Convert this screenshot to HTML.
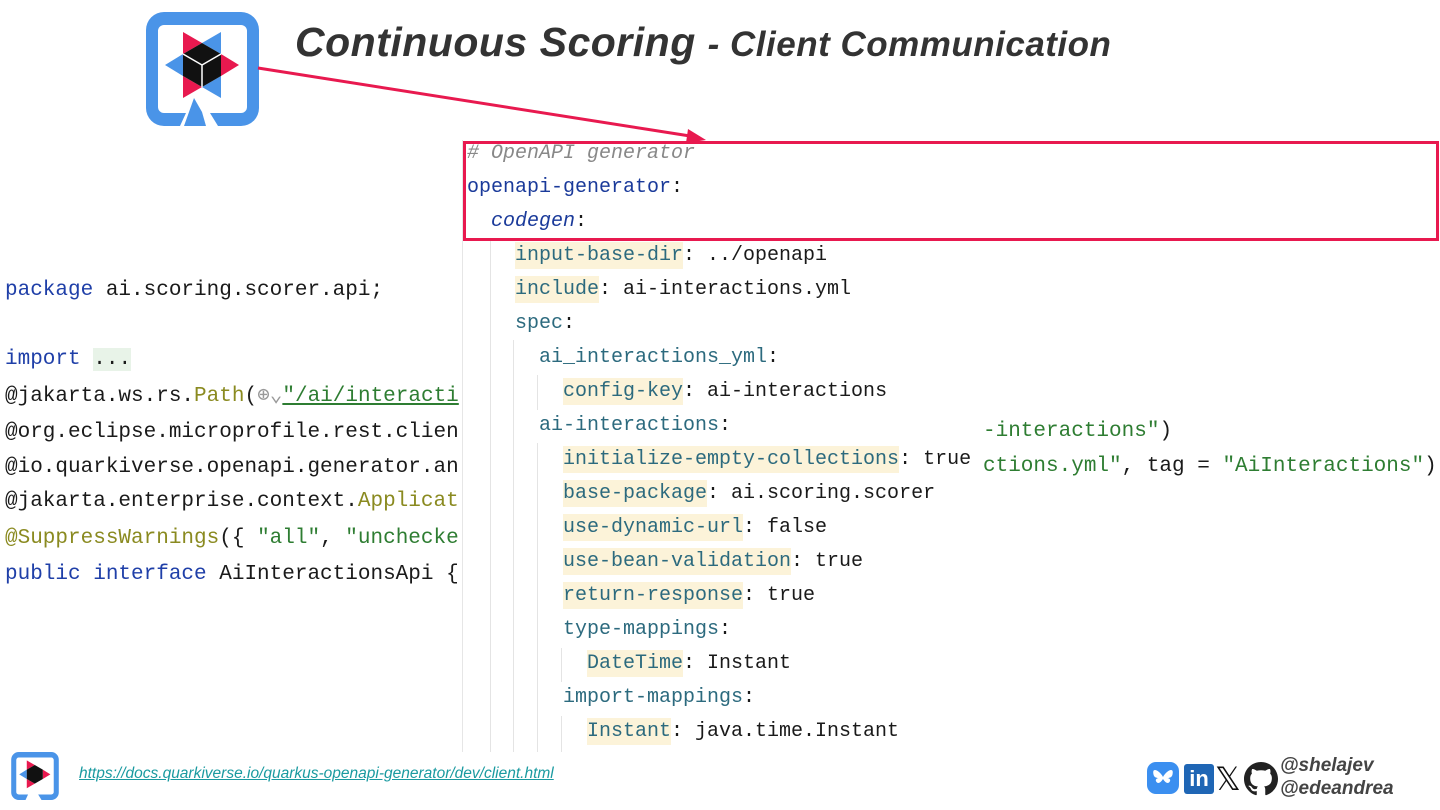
<!DOCTYPE html>
<html><head><meta charset="utf-8"><style>
*{margin:0;padding:0;box-sizing:border-box}
body{width:1440px;height:810px;background:#fff;position:relative;overflow:hidden;font-family:"Liberation Mono",monospace}
.t{position:absolute;white-space:pre}
.L{position:absolute;left:5px;font-size:21px;line-height:36px;color:#1a1a1a;white-space:pre}
.kw{color:#1f3fa8}
.an{color:#8a8a20}
.st{color:#2e7d32}
#panel{position:absolute;left:462px;top:140px;width:514px;height:612px;background:#fff;border-left:1px solid #e6e6e6}
.Y{position:absolute;font-size:20px;line-height:34px;height:34px;color:#1a1a1a;white-space:pre}
.k{color:#2c6a7e;background:#fcf3d9;padding:2px 0}
.kb{color:#1a3a9a}
.g{position:absolute;width:1px;background:#e4e4e4}
</style></head><body>

<!-- logo -->
<svg style="position:absolute;left:146px;top:12px" width="113" height="114" viewBox="0 0 113 114">
<path d="M18 0H95A18 18 0 0 1 113 18V96A18 18 0 0 1 95 114H72L64 101H95A6 6 0 0 0 101 95V19A6 6 0 0 0 95 13H18A6 6 0 0 0 12 19V95A6 6 0 0 0 18 101H40L34 114H18A18 18 0 0 1 0 96V18A18 18 0 0 1 18 0Z" fill="#4a94e8"/>
<path d="M48 86L56 100L60 114H38Z" fill="#4a94e8"/>
<polygon points="37,20 56,31 37,42" fill="#e8194f"/>
<polygon points="75,20 75,42 56,31" fill="#4a94e8"/>
<polygon points="19,53 37,42 37,64" fill="#4a94e8"/>
<polygon points="93,53 75,42 75,64" fill="#e8194f"/>
<polygon points="37,86 37,64 56,75" fill="#e8194f"/>
<polygon points="75,86 56,75 75,64" fill="#4a94e8"/>
<polygon points="56,31 75,42 75,64 56,75 37,64 37,42" fill="#111"/>
<path d="M56 53L37 42M56 53L75 42M56 53V75" stroke="#fff" stroke-width="1.5"/>
</svg>

<div class="t" style="left:295px;top:19px;font-family:'Liberation Sans',sans-serif;font-weight:bold;font-style:italic;color:#333;font-size:41px;letter-spacing:0.5px">Continuous Scoring <span style="font-size:35px">- Client Communication</span></div>

<!-- left code -->
<div class="L" style="top:273px"><span class="kw">package</span> ai.scoring.scorer.api;</div>
<div class="L" style="top:342px"><span class="kw">import</span> <span style="background:#e8f3e8">...</span></div>
<div class="L" style="top:379px">@jakarta.ws.rs.<span class="an">Path</span>(<span style="color:#999">⊕⌄</span><span class="st" style="text-decoration:underline">"/ai/interacti</span></div>
<div class="L" style="top:415px">@org.eclipse.microprofile.rest.clien</div>
<div class="L" style="top:450px">@io.quarkiverse.openapi.generator.an</div>
<div class="L" style="top:484px">@jakarta.enterprise.context.<span class="an">Applicat</span></div>
<div class="L" style="top:521px"><span class="an">@SuppressWarnings</span>({ <span class="st">"all"</span>, <span class="st">"unchecke</span></div>
<div class="L" style="top:557px"><span class="kw">public interface</span> AiInteractionsApi {</div>
<div class="L" style="left:983px;top:414px"><span class="st">-interactions"</span>)</div>
<div class="L" style="left:983px;top:449px"><span class="st">ctions.yml"</span>, tag = <span class="st">"AiInteractions"</span>)</div>

<div id="panel">
<div class="g" style="left:27px;top:100px;height:512px"></div>
<div class="g" style="left:50px;top:200px;height:412px"></div>
<div class="g" style="left:74px;top:235px;height:35px"></div>
<div class="g" style="left:74px;top:303px;height:309px"></div>
<div class="g" style="left:98px;top:508px;height:34px"></div>
<div class="g" style="left:98px;top:576px;height:36px"></div>
<div class="Y" style="left:4px;top:-3px;color:#888;font-style:italic"># OpenAPI generator</div>
<div class="Y" style="left:4px;top:31px"><span class="kb">openapi-generator</span>:</div>
<div class="Y" style="left:28px;top:65px"><span class="kb" style="font-style:italic">codegen</span>:</div>
<div class="Y" style="left:52px;top:99px"><span class="k">input-base-dir</span>: ../openapi</div>
<div class="Y" style="left:52px;top:133px"><span class="k">include</span>: ai-interactions.yml</div>
<div class="Y" style="left:52px;top:167px"><span style="color:#2c6a7e">spec</span>:</div>
<div class="Y" style="left:76px;top:201px"><span style="color:#2c6a7e">ai_interactions_yml</span>:</div>
<div class="Y" style="left:100px;top:235px"><span class="k">config-key</span>: ai-interactions</div>
<div class="Y" style="left:76px;top:269px"><span style="color:#2c6a7e">ai-interactions</span>:</div>
<div class="Y" style="left:100px;top:303px"><span class="k">initialize-empty-collections</span>: true</div>
<div class="Y" style="left:100px;top:337px"><span class="k">base-package</span>: ai.scoring.scorer</div>
<div class="Y" style="left:100px;top:371px"><span class="k">use-dynamic-url</span>: false</div>
<div class="Y" style="left:100px;top:405px"><span class="k">use-bean-validation</span>: true</div>
<div class="Y" style="left:100px;top:439px"><span class="k">return-response</span>: true</div>
<div class="Y" style="left:100px;top:473px"><span style="color:#2c6a7e">type-mappings</span>:</div>
<div class="Y" style="left:124px;top:507px"><span class="k">DateTime</span>: Instant</div>
<div class="Y" style="left:100px;top:541px"><span style="color:#2c6a7e">import-mappings</span>:</div>
<div class="Y" style="left:124px;top:575px"><span class="k">Instant</span>: java.time.Instant</div>
</div>

<!-- red box and arrow -->
<div style="position:absolute;left:463px;top:141px;width:976px;height:100px;border:3px solid #e8194f"></div>
<svg style="position:absolute;left:0;top:0" width="1440" height="810">
<line x1="258" y1="68" x2="690" y2="136" stroke="#e8194f" stroke-width="3"/>
<polygon points="706,140 688,129 686,143" fill="#e8194f"/>
</svg>

<!-- footer -->
<svg style="position:absolute;left:11px;top:752px" width="48" height="48" viewBox="0 0 113 114">
<path d="M18 0H95A18 18 0 0 1 113 18V96A18 18 0 0 1 95 114H72L64 101H95A6 6 0 0 0 101 95V19A6 6 0 0 0 95 13H18A6 6 0 0 0 12 19V95A6 6 0 0 0 18 101H40L34 114H18A18 18 0 0 1 0 96V18A18 18 0 0 1 18 0Z" fill="#4a94e8"/>
<polygon points="37,20 56,31 37,42" fill="#e8194f"/>
<polygon points="93,53 75,42 75,64" fill="#e8194f"/>
<polygon points="37,86 37,64 56,75" fill="#e8194f"/>
<polygon points="19,53 37,42 37,64" fill="#4a94e8"/>
<polygon points="56,31 75,42 75,64 56,75 37,64 37,42" fill="#111"/>
</svg>
<div class="t" style="left:79px;top:765px;font-family:'Liberation Sans',sans-serif;font-style:italic;font-size:15.5px;color:#1a9aa0;text-decoration:underline">https://docs.quarkiverse.io/quarkus-openapi-generator/dev/client.html</div>

<svg style="position:absolute;left:1147px;top:762px" width="32" height="32" viewBox="0 0 32 32">
<rect width="32" height="32" rx="9" fill="#3b8ff0"/>
<path d="M16 15C14 11 10 8 8 8C6 8 6 10 6.5 12.5C7 15 9 16 11.5 16C9 16.5 8 18 9.5 20C11 22 13.5 21 16 17C18.5 21 21 22 22.5 20C24 18 23 16.5 20.5 16C23 16 25 15 25.5 12.5C26 10 26 8 24 8C22 8 18 11 16 15Z" fill="#fff"/>
</svg>
<div style="position:absolute;left:1184px;top:764px;width:30px;height:30px;border-radius:3px;background:#1f66b5;color:#fff;font:bold 22px 'Liberation Sans',sans-serif;text-align:center;line-height:30px">in</div>
<div class="t" style="left:1215px;top:760px;font-size:32px;font-family:'DejaVu Sans',sans-serif;color:#111">𝕏</div>
<svg style="position:absolute;left:1244px;top:762px" width="34" height="34" viewBox="0 0 16 16"><path fill="#222" d="M8 0C3.58 0 0 3.58 0 8c0 3.54 2.29 6.530 5.470 7.590.4.07.55-.17.55-.38 0-.19-.01-.82-.01-1.49-2.01.37-2.53-.49-2.690-.94-.09-.23-.48-.94-.82-1.13-.28-.15-.68-.52-.01-.53.63-.01 1.080.58 1.230.82.72 1.210 1.870.87 2.330.66.07-.52.28-.87.51-1.07-1.78-.2-3.64-.89-3.64-3.95 0-.87.31-1.59.82-2.15-.08-.2-.36-1.020.08-2.12 0 0 .67-.21 2.2.82.64-.18 1.32-.27 2-.27.68 0 1.36.09 2 .27 1.53-1.04 2.2-.82 2.2-.82.44 1.1.16 1.920.08 2.12.51.56.82 1.27.82 2.15 0 3.07-1.87 3.75-3.65 3.95.29.25.54.73.54 1.48 0 1.07-.01 1.93-.01 2.2 0 .21.15.46.55.38A8.013 8.013 0 0016 8c0-4.42-3.58-8-8-8z"/></svg>
<div class="t" style="left:1280px;top:754px;font-family:'Liberation Sans',sans-serif;font-weight:bold;font-style:italic;font-size:19px;line-height:23px;color:#444">@shelajev<br>@edeandrea</div>
</body></html>
